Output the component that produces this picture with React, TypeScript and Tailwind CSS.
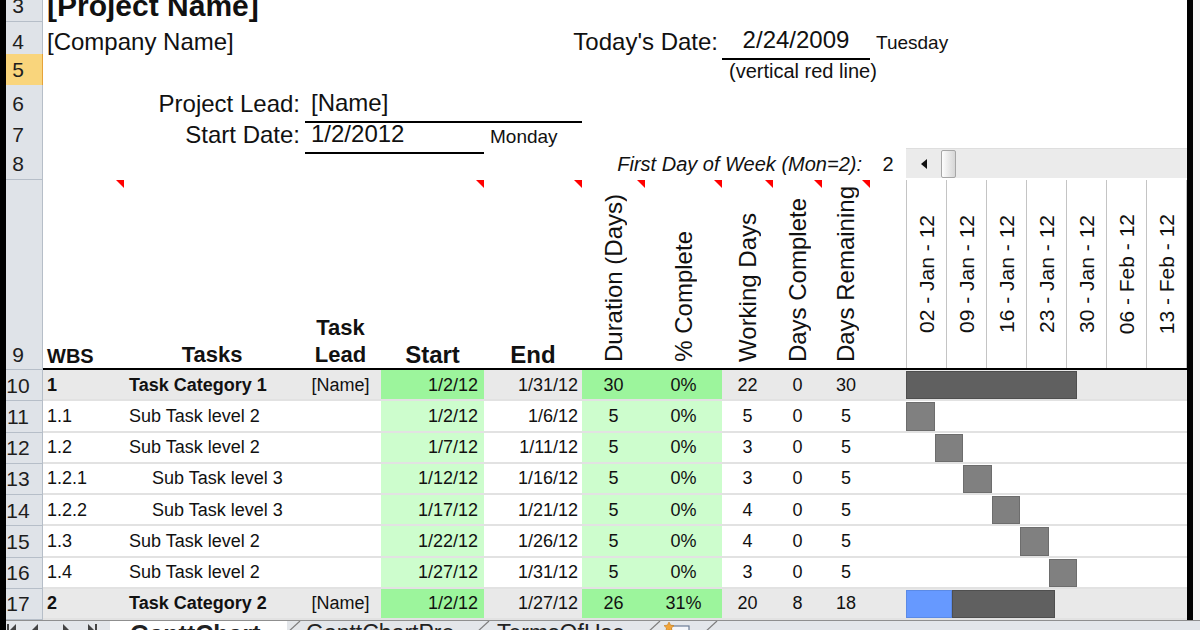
import React from 'react';

// one day in the gantt area (a week column is 40px)
const DAY = 40 / 7;

const GRID =
  'grid grid-cols-[37px_81px_176px_81px_103px_98px_63px_77px_51px_49px_48px_36px_281px]';

interface Task {
  n: number;
  wbs: string;
  name: string;
  lead?: string;
  start: string;
  end: string;
  dur: string;
  pct: string;
  wd: string;
  dc: string;
  dr: string;
  cat?: boolean;
  indent?: boolean;
  off: number;
  done: number;
  len: number;
}

const TASKS: Task[] = [
  { n: 10, wbs: '1', name: 'Task Category 1', lead: '[Name]', start: '1/2/12', end: '1/31/12', dur: '30', pct: '0%', wd: '22', dc: '0', dr: '30', cat: true, off: 0, done: 0, len: 30 },
  { n: 11, wbs: '1.1', name: 'Sub Task level 2', start: '1/2/12', end: '1/6/12', dur: '5', pct: '0%', wd: '5', dc: '0', dr: '5', off: 0, done: 0, len: 5 },
  { n: 12, wbs: '1.2', name: 'Sub Task level 2', start: '1/7/12', end: '1/11/12', dur: '5', pct: '0%', wd: '3', dc: '0', dr: '5', off: 5, done: 0, len: 5 },
  { n: 13, wbs: '1.2.1', name: 'Sub Task level 3', indent: true, start: '1/12/12', end: '1/16/12', dur: '5', pct: '0%', wd: '3', dc: '0', dr: '5', off: 10, done: 0, len: 5 },
  { n: 14, wbs: '1.2.2', name: 'Sub Task level 3', indent: true, start: '1/17/12', end: '1/21/12', dur: '5', pct: '0%', wd: '4', dc: '0', dr: '5', off: 15, done: 0, len: 5 },
  { n: 15, wbs: '1.3', name: 'Sub Task level 2', start: '1/22/12', end: '1/26/12', dur: '5', pct: '0%', wd: '4', dc: '0', dr: '5', off: 20, done: 0, len: 5 },
  { n: 16, wbs: '1.4', name: 'Sub Task level 2', start: '1/27/12', end: '1/31/12', dur: '5', pct: '0%', wd: '3', dc: '0', dr: '5', off: 25, done: 0, len: 5 },
  { n: 17, wbs: '2', name: 'Task Category 2', lead: '[Name]', start: '1/2/12', end: '1/27/12', dur: '26', pct: '31%', wd: '20', dc: '8', dr: '18', cat: true, off: 0, done: 8, len: 26 },
];

const WEEKS = ['02 - Jan - 12', '09 - Jan - 12', '16 - Jan - 12', '23 - Jan - 12', '30 - Jan - 12', '06 - Feb - 12', '13 - Feb - 12'];

function Num({ n, hi, className = 'items-center' }: { n: number; hi?: boolean; className?: string }) {
  return (
    <div
      className={`flex border-r border-b ${
        hi ? 'bg-[#f9d57c] border-[#e6a33a]' : 'bg-[#dfe3e8] border-[#b6bec8]'
      } ${className}`}
    >
      <span className="w-[24px] text-center text-[21px] leading-none text-[#1e1e1e]">{n}</span>
    </div>
  );
}

function Comment() {
  return (
    <span className="absolute top-0 right-0 w-0 h-0 border-t-[8px] border-l-[8px] border-t-[#ff0000] border-l-transparent" />
  );
}

function HCell({ tri, className = '', children }: { tri?: boolean; className?: string; children?: React.ReactNode }) {
  return (
    <div className={`relative flex items-end border-b-2 border-black ${className}`}>
      {tri && <Comment />}
      {children}
    </div>
  );
}

function VCell({ label }: { label: string }) {
  return (
    <HCell tri className="justify-center pb-[6px]">
      <span className="[writing-mode:vertical-rl] rotate-180 whitespace-nowrap text-[24px] leading-none">{label}</span>
    </HCell>
  );
}

function Scrollbar() {
  return (
    <div className="flex flex-col">
      <div className="h-[30px] flex items-center bg-[#ebebeb] border-t border-[#dedede]">
        <div className="w-[35px] flex justify-center">
          <svg width="8" height="10" viewBox="0 0 8 10">
            <path d="M7 0 L1 5 L7 10 Z" fill="#111" />
          </svg>
        </div>
        <div className="w-[15px] h-[28px] rounded-[2px] border border-[#a6a6a6] bg-gradient-to-r from-[#fdfdfd] to-[#d6d6d6]" />
      </div>
    </div>
  );
}

function DataRow({ t }: { t: Task }) {
  const base = t.cat ? 'bg-[#e9e9e9]' : 'bg-white';
  const green = t.cat ? 'bg-[#9cf59c]' : 'bg-[#cdfdcd]';
  const cell = 'flex items-center border-b-2 border-[#e2e2e2] text-[18px] leading-none';
  const bold = t.cat ? 'font-bold' : '';
  return (
    <div className={`${GRID} h-[31.25px]`}>
      <Num n={t.n} />
      <div className={`${cell} ${base} ${bold} pl-[4px]`}>{t.wbs}</div>
      <div className={`${cell} ${base} ${bold} ${t.indent ? 'pl-[28px]' : 'pl-[5px]'} whitespace-nowrap`}>{t.name}</div>
      <div className={`${cell} ${base} justify-center`}>{t.lead}</div>
      <div className={`${cell} ${green} justify-end pr-[6px]`}>{t.start}</div>
      <div className={`${cell} ${base} justify-end pr-[4px]`}>{t.end}</div>
      <div className={`${cell} ${green} justify-center`}>{t.dur}</div>
      <div className={`${cell} ${green} justify-center`}>{t.pct}</div>
      <div className={`${cell} ${base} justify-center`}>{t.wd}</div>
      <div className={`${cell} ${base} justify-center`}>{t.dc}</div>
      <div className={`${cell} ${base} justify-center`}>{t.dr}</div>
      <div className={`${cell} ${base}`} />
      <div className={`flex pt-[1px] border-b-2 border-[#e2e2e2] ${base}`}>
        <div className="shrink-0" style={{ width: t.off * DAY }} />
        {t.done > 0 && (
          <div className="shrink-0 bg-[#6699ff] border border-[#5b8ae6]" style={{ width: t.done * DAY }} />
        )}
        <div
          className={`shrink-0 border ${t.cat ? 'bg-[#606060] border-[#4f4f4f]' : 'bg-[#808080] border-[#6d6d6d]'}`}
          style={{ width: (t.len - t.done) * DAY }}
        />
      </div>
    </div>
  );
}

function Slant() {
  return (
    <svg width="14" height="12" viewBox="0 0 14 12" className="shrink-0">
      <path d="M13 0 L0 12" stroke="#7d7d7d" strokeWidth="1.2" />
    </svg>
  );
}

function TabBar() {
  return (
    <div className="h-[28px] shrink-0 flex items-start bg-[#e3e6ea] border-t border-[#8f8f8f] text-[#222] leading-none">
      <div className="w-[98px] shrink-0 flex items-start pt-[2px]">
        <svg width="98" height="14" viewBox="0 0 98 14">
          <rect x="1" y="1" width="2" height="13" fill="#444" />
          <path d="M10 1 L4 7 L10 13 Z" fill="#444" />
          <path d="M32 1 L26 7 L32 13 Z" fill="#444" />
          <path d="M57 1 L63 7 L57 13 Z" fill="#444" />
          <path d="M82 1 L88 7 L82 13 Z" fill="#444" />
          <rect x="89" y="1" width="2" height="13" fill="#444" />
        </svg>
      </div>
      <div className="w-[6px] shrink-0" />
      <div className="w-[177px] shrink-0 h-full bg-white pl-[20px] pt-[1px] text-[25px] font-bold">GanttChart</div>
      <Slant />
      <div className="w-[175px] shrink-0 pl-[5px] pt-[1px] text-[23px]">GanttChartPro</div>
      <Slant />
      <div className="w-[157px] shrink-0 pl-[7px] pt-[1px] text-[23px]">TermsOfUse</div>
      <Slant />
      <div className="w-[43px] shrink-0 pl-[2px] pt-[1px]">
        <svg width="30" height="16" viewBox="0 0 30 16">
          <rect x="8" y="4" width="18" height="12" fill="#f4f6fa" stroke="#6c7d96" strokeWidth="1.2" />
          <path d="M6 0 L7.6 3.2 L11 3.6 L8.5 6 L9.2 9.5 L6 7.8 L2.8 9.5 L3.5 6 L1 3.6 L4.4 3.2 Z" fill="#f2a53a" stroke="#c67a14" strokeWidth="0.6" />
        </svg>
      </div>
      <Slant />
    </div>
  );
}

export default function App() {
  return (
    <div className="w-[1200px] h-[630px] overflow-hidden flex bg-white font-['Liberation_Sans',Arial,sans-serif] text-[#111]">
      <div className="w-[6px] shrink-0 bg-[#000]" />
      <div className="w-[1194px] shrink-0 flex flex-col">
        <div className="h-[620px] shrink-0 flex overflow-hidden">
          <div className="w-[1181px] shrink-0 flex flex-col -mt-[10px]">
            {/* row 3 */}
            <div className={`${GRID} h-[32px]`}>
              <Num n={3} />
              <div className="col-span-12 flex items-center pl-[4px] text-[30px] font-bold leading-none">[Project Name]</div>
            </div>

            {/* row 4 */}
            <div className={`${GRID} h-[32px]`}>
              <Num n={4} />
              <div className="col-span-4 flex items-center pl-[4px] text-[24px] whitespace-nowrap">[Company Name]</div>
              <div className="col-span-3 flex items-center justify-end pr-[4px] text-[24px] whitespace-nowrap">Today's Date:</div>
              <div className="col-span-3 flex items-center justify-center mb-[1px] border-b-2 border-black text-[24px]">2/24/2009</div>
              <div className="col-span-2 flex items-center pl-[6px] pt-[4px] text-[19px]">Tuesday</div>
            </div>

            {/* row 5 */}
            <div className={`${GRID} h-[31px]`}>
              <Num n={5} hi />
              <div className="col-span-7" />
              <div className="col-span-5 flex items-center pl-[7px] pt-[2px] text-[20px] whitespace-nowrap">(vertical red line)</div>
            </div>

            {/* row 6 */}
            <div className={`${GRID} h-[31px]`}>
              <Num n={6} />
              <div className="col-span-2 flex items-center justify-end text-[24px] whitespace-nowrap">Project Lead:</div>
              <div className="col-span-3 flex items-center ml-[5px] pl-[6px] border-b-2 border-black text-[24px]">[Name]</div>
              <div className="col-span-7" />
            </div>

            {/* row 7 */}
            <div className={`${GRID} h-[32px]`}>
              <Num n={7} />
              <div className="col-span-2 flex items-center justify-end text-[24px] whitespace-nowrap">Start Date:</div>
              <div className="col-span-2 flex items-center ml-[5px] pl-[6px] border-b-2 border-black text-[24px]">1/2/2012</div>
              <div className="flex items-center pl-[6px] pt-[5px] text-[19px]">Monday</div>
              <div className="col-span-7" />
            </div>

            {/* row 8 */}
            <div className={`${GRID} h-[32px]`}>
              <Num n={8} />
              <div className="col-span-10 flex items-center justify-end pr-[8px] text-[20px] italic whitespace-nowrap">
                First Day of Week (Mon=2):
              </div>
              <div className="flex items-center justify-center text-[20px]">2</div>
              <Scrollbar />
            </div>

            {/* row 9: column headings */}
            <div className={`${GRID} h-[190px]`}>
              <Num n={9} className="items-end pb-[4px]" />
              <HCell tri className="pl-[4px] pb-[2px] text-[20px] font-bold leading-none">WBS</HCell>
              <HCell className="justify-center pb-[2px] text-[22px] font-bold leading-none">Tasks</HCell>
              <HCell className="justify-center text-center text-[22px] font-bold leading-[27px]">
                Task
                <br />
                Lead
              </HCell>
              <HCell tri className="justify-center pb-[1px] text-[24px] font-bold leading-none">Start</HCell>
              <HCell tri className="justify-center pb-[1px] text-[24px] font-bold leading-none">End</HCell>
              <VCell label="Duration (Days)" />
              <VCell label="% Complete" />
              <VCell label="Working Days" />
              <VCell label="Days Complete" />
              <VCell label="Days Remaining" />
              <HCell />
              <div className="flex border-b-2 border-black">
                {WEEKS.map((w, i) => (
                  <div
                    key={w}
                    className={`flex items-center justify-center border-l border-[#c4c4c4] ${
                      i === WEEKS.length - 1 ? 'w-[41px] border-r' : 'w-[40px]'
                    }`}
                  >
                    <span className="[writing-mode:vertical-rl] rotate-180 whitespace-nowrap text-[21px] leading-none">{w}</span>
                  </div>
                ))}
              </div>
            </div>

            {TASKS.map((t) => (
              <DataRow key={t.n} t={t} />
            ))}
          </div>
          <div className="w-[6px] shrink-0 bg-[#000]" />
          <div className="w-[7px] shrink-0 bg-[#f5f5f5]" />
        </div>
        <TabBar />
      </div>
    </div>
  );
}
